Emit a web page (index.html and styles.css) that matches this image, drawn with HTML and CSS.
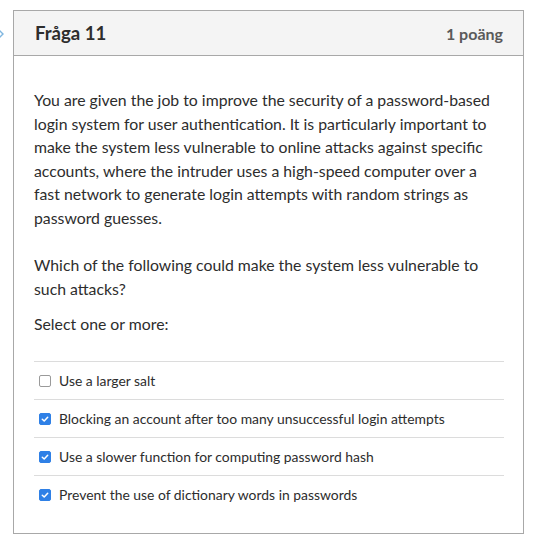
FILE: index.html
```html
<!DOCTYPE html>
<html>
<head>
<meta charset="utf-8">
<link rel="stylesheet" href="styles.css">
</head>
<body>
<div class="page">
  <div class="gutter">
    <svg class="chev" width="10" height="14" viewBox="0 0 10 14"><path d="M1 1 L7 7 L1 13" fill="none" stroke="#7fb6e0" stroke-width="1.4"/></svg>
  </div>
  <div class="card">
    <div class="card-head">
      <h2 class="title">Fråga 11</h2>
      <span class="points">1 poäng</span>
    </div>
    <div class="card-body">
      <p class="para">You are given the job to improve the security of a password-based login system for user authentication. It is particularly important to make the system less vulnerable to online attacks against specific accounts, where the intruder uses a high-speed computer over a fast network to generate login attempts with random strings as password guesses.</p>
      <p class="para para-q">Which of the following could make the system less vulnerable to such attacks?</p>
      <p class="prompt">Select one or more:</p>
      <ul class="options">
        <li class="option"><span class="box"></span><span>Use a larger salt</span></li>
        <li class="option"><span class="box checked"><svg viewBox="0 0 12 12" width="12" height="12"><path d="M3.3 6.2 L5.2 8 L8.7 4.2" fill="none" stroke="#fff" stroke-width="1.5" stroke-linecap="round" stroke-linejoin="round"/></svg></span><span>Blocking an account after too many unsuccessful login attempts</span></li>
        <li class="option"><span class="box checked"><svg viewBox="0 0 12 12" width="12" height="12"><path d="M3.3 6.2 L5.2 8 L8.7 4.2" fill="none" stroke="#fff" stroke-width="1.5" stroke-linecap="round" stroke-linejoin="round"/></svg></span><span>Use a slower function for computing password hash</span></li>
        <li class="option"><span class="box checked"><svg viewBox="0 0 12 12" width="12" height="12"><path d="M3.3 6.2 L5.2 8 L8.7 4.2" fill="none" stroke="#fff" stroke-width="1.5" stroke-linecap="round" stroke-linejoin="round"/></svg></span><span>Prevent the use of dictionary words in passwords</span></li>
      </ul>
    </div>
  </div>
</div>
</body>
</html>
```

FILE: styles.css
```css
* { box-sizing: border-box; }
html, body { margin: 0; padding: 0; background: #fff; }
body { font-family: Lato, "Open Sans", sans-serif; color: #2d2d2d; }
.page { display: flex; padding-top: 10px; }
.gutter { width: 13px; display: flex; align-items: flex-start; padding-top: 17px; overflow: hidden; }
.chev { margin-left: -4px; }
.card { width: 511px; border: 1px solid #a8a8a8; }
.card-head {
  height: 45px;
  background: #f4f4f4;
  border-bottom: 1px solid #a8a8a8;
  display: flex;
  align-items: center;
  justify-content: space-between;
  padding: 0 20px 0 21px;
}
.title { margin: 0; font-size: 18.6px; font-weight: 700; color: #2d2d2d; }
.points { font-size: 16px; font-weight: 700; color: #5a5a5a; }
.card-body { padding: 32px 19px 20px 20px; }
.para { margin: 0 0 24px; font-size: 15.8px; line-height: 23.5px; }
.para-q { margin-bottom: 12px; }
.prompt { margin: 0 0 25px; font-size: 15.8px; line-height: 24px; }
.options { list-style: none; margin: 0; padding: 0; }
.option {
  border-top: 1px solid #dcdcdc;
  height: 38px;
  display: flex;
  align-items: center;
  gap: 8px;
  padding-left: 5px;
  font-size: 13.9px;
}
.box {
  width: 12px; height: 12px;
  border: 1px solid #9a9a9a;
  border-radius: 2px;
  display: flex;
  background: #fff;
}
.box.checked { background: #2f80e6; border-color: #2f80e6; }
.box.checked svg { margin: -1px; }
```
